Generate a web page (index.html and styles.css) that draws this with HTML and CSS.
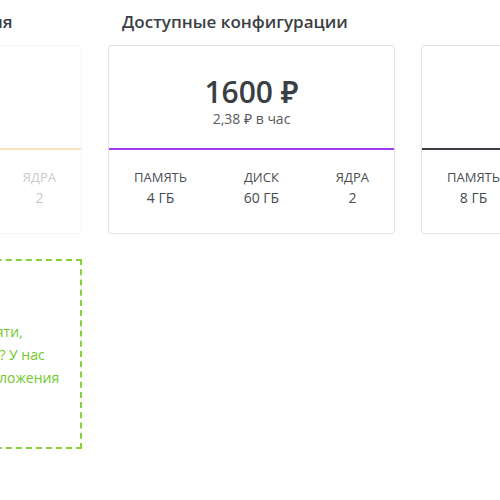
FILE: index.html
```html
<!DOCTYPE html>
<html lang="ru">
<head>
<meta charset="utf-8">
<title>Конфигурации</title>
<link rel="stylesheet" href="styles.css">
</head>
<body>
<div class="page">
  <section class="column current">
    <h2 class="heading">Текущая конфигурация</h2>
    <div class="card card-faded">
      <div class="card-top divider-orange">
        <div class="price">800 ₽</div>
        <div class="hourly">1,19 ₽ в час</div>
      </div>
      <div class="specs">
        <div class="spec"><div class="spec-label">Память</div><div class="spec-value">2 ГБ</div></div>
        <div class="spec"><div class="spec-label">Диск</div><div class="spec-value">30 ГБ</div></div>
        <div class="spec"><div class="spec-label">Ядра</div><div class="spec-value">2</div></div>
      </div>
    </div>
    <div class="hint">
      <p class="hint-text">Когда вам не хватает памяти,<br>дискового места или ядер? У нас<br>есть план для любого приложения</p>
    </div>
  </section>
  <section class="column available">
    <h2 class="heading">Доступные конфигурации</h2>
    <div class="cards">
      <div class="card">
        <div class="card-top divider-purple">
          <div class="price">1600 ₽</div>
          <div class="hourly">2,38 ₽ в час</div>
        </div>
        <div class="specs">
          <div class="spec"><div class="spec-label">Память</div><div class="spec-value">4 ГБ</div></div>
          <div class="spec"><div class="spec-label">Диск</div><div class="spec-value">60 ГБ</div></div>
          <div class="spec"><div class="spec-label">Ядра</div><div class="spec-value">2</div></div>
        </div>
      </div>
      <div class="card">
        <div class="card-top divider-dark">
          <div class="price">3200 ₽</div>
          <div class="hourly">4,76 ₽ в час</div>
        </div>
        <div class="specs">
          <div class="spec"><div class="spec-label">Память</div><div class="spec-value">8 ГБ</div></div>
          <div class="spec"><div class="spec-label">Диск</div><div class="spec-value">80 ГБ</div></div>
          <div class="spec"><div class="spec-label">Ядра</div><div class="spec-value">4</div></div>
        </div>
      </div>
    </div>
  </section>
</div>
</body>
</html>
```
FILE: styles.css
```css
html, body {
  margin: 0;
  padding: 0;
  background: #ffffff;
  overflow: hidden;
}
body {
  font-family: "Open Sans", "Noto Sans", sans-serif;
  color: #3a3f45;
}
.page {
  display: flex;
  gap: 26px;
  margin-left: -205px;
  padding-top: 10px;
  width: max-content;
}
.column {
  display: flex;
  flex-direction: column;
}
.current {
  width: 287px;
}
.heading {
  margin: 0 0 11px;
  padding-left: 14px;
  font-size: 17px;
  font-weight: 600;
  line-height: 24px;
  color: #3a3f45;
  white-space: nowrap;
}
.cards {
  display: flex;
  gap: 26px;
}
.card {
  width: 287px;
  box-sizing: border-box;
  border: 1px solid #dfe2e6;
  border-radius: 3px;
  background: #fff;
}
.card-faded {
  opacity: 0.3;
}
.card-top {
  padding: 29px 10px 19px;
  text-align: center;
  border-bottom: 2px solid #3a3f45;
}
.divider-purple { border-bottom-color: #a13bf2; }
.divider-orange { border-bottom-color: #f5a623; }
.divider-dark { border-bottom-color: #3a3f45; }
.price {
  font-size: 30px;
  font-weight: 600;
  line-height: 34px;
  color: #3a3f45;
}
.hourly {
  font-size: 14px;
  line-height: 20px;
  color: #555a60;
}
.specs {
  display: flex;
  justify-content: space-between;
  padding: 18px 25px 25px;
}
.spec {
  text-align: center;
}
.spec-label {
  font-size: 13px;
  line-height: 18px;
  text-transform: uppercase;
  color: #4a4f55;
}
.spec-value {
  margin-top: 2px;
  font-size: 14px;
  line-height: 20px;
  color: #444a50;
}
.hint {
  margin-top: 25px;
  height: 190px;
  box-sizing: border-box;
  border: 2px dashed #86d23a;
  display: flex;
  align-items: center;
  padding: 0 24px;
}
.hint-text {
  margin: 0;
  font-size: 14px;
  line-height: 23px;
  color: #72c92b;
  white-space: nowrap;
}
```
